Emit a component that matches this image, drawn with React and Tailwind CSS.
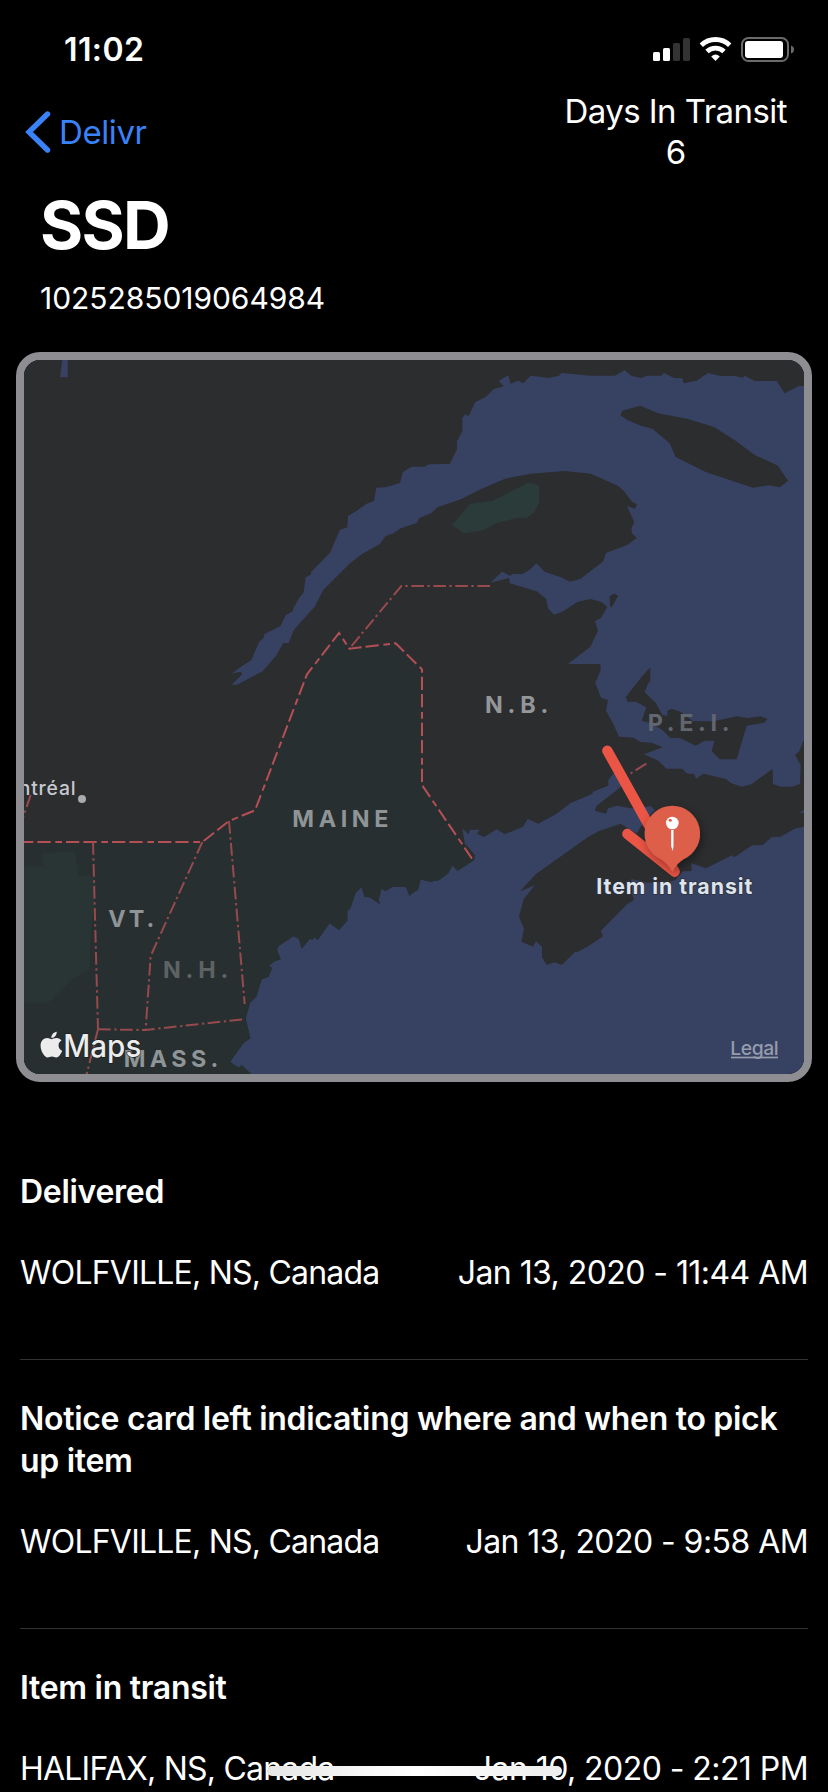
import { FaApple } from "react-icons/fa";

// The map is drawn at three units per pixel, in four quadrants.
const NW = [0, 1020];
const NE = [1242, 1020];
const SW = [0, 2100];
const SE = [1242, 2100];

const at = ([ox, oy], list) =>
  list
    .trim()
    .split(/\s+/)
    .map((p) => {
      const [x, y] = p.split(",").map(Number);
      return `${x + ox},${y + oy}`;
    })
    .join(" ");

const mainland = [
  at(NE, `1190,138 1155,138 1112,160 1088,123 1022,123 992,107 985,114 965,108 920,108 882,99 848,122 808,130 806,115 780,114 750,99 742,107 700,107 680,114 652,107 632,91 602,107 530,107 443,99 435,107 405,114 350,107 328,130 312,122 290,131 282,106 254,124 270,139 240,147 216,170 184,186 163,230 155,222 145,234 145,274 129,304 129,328 107,372 45,373 32,380 -8,380`),
  at(NW, `1208,397 1200,429 1157,442 1129,443 1122,483 1100,491 1068,514 1044,528 1042,562 1020,569 990,638 934,695 932,704 917,712 911,757 900,770 880,805 878,814 857,826 841,859 793,882 792,892 777,907 754,960 717,985 695,1001 722,995 727,1003 695,1034 710,1034 788,994 828,947 850,909 866,909 882,869 945,799 969,751 1050,670 1085,643 1140,612 1157,588 1178,581 1202,565 1242,552`),
  at(NE, `8,549 15,535 52,519 70,502 142,477 200,448 273,416 350,401 452,393 530,401 613,438 630,454 655,486 669,493 663,506 639,498 661,547 653,563 653,579 668,594 640,615 576,639 568,664 499,717 468,725 440,712 392,695 367,670 350,687 326,702 294,702 290,708 264,695 229,728 286,714 287,730 368,754 396,776 403,806 420,824 448,814 491,785 530,777 563,786 580,801 560,835 543,843 552,872 529,920 462,972 559,972 560,991 544,1028 561,1073 582,1080 576,1112`),
  at(SE, `598,72 615,110 659,113 680,126 712,128 746,142 690,163 733,182 757,206 804,206 820,221 840,221 846,236 868,221 936,237 950,249 984,260 1012,253 1076,206 1077,252 1101,260 1134,260 1158,252 1160,195 1143,165 1155,155 1168,122 1190,112 1190,328 1170,330 1155,338 1190,338 1190,376 1170,380 1142,386 1099,410 1073,412 1046,435 1015,436 961,472 954,466 876,505 832,490 833,513 806,514 785,540 765,547 700,548 652,537 655,585 660,600 640,612 560,693 567,709 521,740 490,756 483,756 443,795 422,787 398,795 384,772 384,740 366,724 357,740 322,725 330,686 315,650 329,597 363,555 317,575 365,523 522,411 555,393 620,371 642,385 668,400 690,365 722,330 709,318 680,325 650,325 608,317 582,325 576,341 542,332 548,317 575,296 625,257 600,218 583,240 583,257 536,275 536,281 470,309 427,342 373,371 341,357 327,380 272,403 248,388 211,411 189,402 197,389 168,389 163,403 145,385 152,430 183,465 181,480 131,512 115,496 103,519 75,541 48,545 20,538 12,570 0,576`),
  at(SW, `1228,587 1218,560 1178,560 1157,573 1144,566 1136,600 1141,613 1109,592 1093,590 1085,560 1067,578 1050,628 1042,632 1042,662 1017,690 989,669 953,720 942,710 938,720 930,716 905,746 897,717 880,709 835,739 831,750 842,778 824,784 806,798 816,803 806,830 785,838 769,890 750,908 737,955 751,1015 730,1030 690,1086 717,1103 725,1095 753,1122 753,1140 60,1140 60,-1040 1242,-1040 2432,-1040`),
].join(" ");

const anticosti = at(NE, "625,212 679,197 733,220 822,237 900,261 965,302 1022,345 1092,377 1122,422 1098,442 1065,436 1017,443 875,396 785,351 767,310 715,266 680,257 640,240 619,226");
const miscou = at(NE, "587,768 601,761 613,767 593,801 588,800");
const pei = at(SE, "709,-98 709,-58 701,-47 692,-23 725,8 745,45 760,48 760,32 773,26 800,35 836,64 900,64 968,49 1000,54 1040,49 1060,56 1052,68 998,77 968,178 917,178 893,154 901,122 872,122 845,137 798,114 769,114 745,90 710,70 683,62 697,22 665,5 641,5 635,-8 685,-72");
const gaspePark = at(NE, "343,428 376,436 376,486 360,518 338,533 308,534 248,549 204,572 150,580 114,555 168,491 235,483");
const adirondacks = at(SW, "125,460 225,452 235,530 268,525 290,545 272,700 270,810 220,835 145,908 60,908 60,500 130,498");
const usBorder = [
  at(SW, "60,426 607,426 687,363 765,331"),
  at(NW, "921,1003 1017,879 1048,926 1187,910 1266,988"),
  at(SE, "24,255 178,482"),
].join(" ");
const usLand = [usBorder, at(SE, "260,700"), at(SW, "1242,1140 60,1140")].join(" ");

const stateLines = [
  at(SW, "279,426 294,988"),
  at(SW, "607,426 452,768 437,988"),
  at(SW, "687,363 734,912"),
  at(SW, "294,988 437,990 737,957"),
  at(SW, "294,988 258,1130"),
  at(NE, "228,738 -38,738 -194,926"),
  at(SW, "92,285 68,356"),
  at(SE, "697,191 650,220"),
];

const labels = [
  { t: "N.B.", x: 1455, y: 2140, w: 190, c: "#94979a" },
  { t: "P.E.I.", x: 1943, y: 2192, w: 246, c: "#62666f" },
  { t: "MAINE", x: 877, y: 2481, w: 288, c: "#8f9496" },
  { t: "VT.", x: 325, y: 2782, w: 138, c: "#8f9496" },
  { t: "N.H.", x: 489, y: 2933, w: 196, c: "#5d6364" },
  { t: "MASS.", x: 371, y: 3201, w: 284, c: "#8f9496" },
];

const events = [
  { title: "Delivered", place: "WOLFVILLE, NS, Canada", when: "Jan 13, 2020 - 11:44 AM" },
  { title: "Notice card left indicating where and when to pick up item", place: "WOLFVILLE, NS, Canada", when: "Jan 13, 2020 - 9:58 AM" },
  { title: "Item in transit", place: "HALIFAX, NS, Canada", when: "Jan 10, 2020 - 2:21 PM" },
];

function StatusBar() {
  return (
    <div className="flex h-[88px] items-start justify-between pl-[64px] pr-[33px] pt-[28px]">
      <span className="pt-px text-[32px] font-semibold leading-[42px] tracking-[0.4px]">11:02</span>
      <svg width="142" height="26" viewBox="653 37 142 26" className="mt-[9px]">
        <rect x="653" y="52" width="7" height="9" rx="1.5" fill="#fff" />
        <rect x="663" y="48" width="7" height="13" rx="1.5" fill="#fff" />
        <rect x="673" y="43" width="7" height="18" rx="1.5" fill="#333" />
        <rect x="683" y="38" width="7" height="23" rx="1.5" fill="#333" />
        <g fill="none" stroke="#fff" strokeWidth="4.8">
          <path d="M701.3 45.3A20.3 20.3 0 0 1 729.7 45.3" />
          <path d="M707 51.5A12.3 12.3 0 0 1 724 51.5" />
        </g>
        <path d="M711.2 56.4Q715.500 52.800 719.800 56.400L715.500 61Z" fill="#fff" />
        <rect x="742" y="38" width="46" height="23" rx="6.500" fill="none" stroke="#6a6a6a" strokeWidth="2" />
        <rect x="745" y="41" width="38" height="17" rx="3" fill="#fff" />
        <path d="M791 45.500Q794 46.500 794 49.500T791 53.500Z" fill="#6a6a6a" />
      </svg>
    </div>
  );
}

function TransitMap() {
  return (
    <svg viewBox="72 1080 2340 2142" className="block h-full w-full" fontFamily='Inter, "Liberation Sans", sans-serif'>
      <defs>
        <clipPath id="land">
          <polygon points={mainland} />
        </clipPath>
        <filter id="pinShadow" x="-40%" y="-40%" width="180%" height="180%">
          <feDropShadow dx="6" dy="10" stdDeviation="14" floodColor="#000" floodOpacity="0.4" />
        </filter>
      </defs>
      <rect x="72" y="1080" width="2340" height="2142" fill="#374263" />
      <g fill="#2c2d2f">
        <polygon points={mainland} />
        <polygon points={anticosti} />
        <polygon points={miscou} />
        <polygon points={pei} />
      </g>
      <g clipPath="url(#land)">
        <polygon points={usLand} fill="#272f30" />
        <polygon points={adirondacks} fill="#293434" />
      </g>
      <polygon points={gaspePark} fill="#2b3b39" />
      <polygon points={at(NW, "188,50 203,50 203,112 180,112")} fill="#374263" />

      <g fill="none" strokeWidth="6">
        <polyline points={usBorder} stroke="#b44f56" strokeDasharray="40 12 40 14 20 12" />
        {stateLines.map((p) => (
          <polyline key={p} points={p} stroke="#974a4e" strokeDasharray="38 11 7 10" />
        ))}
      </g>

      <g fontSize="70" fontWeight="650">
        {labels.map((l) => (
          <text key={l.t} x={l.x} y={l.y} textLength={l.w} fill={l.c}>
            {l.t}
          </text>
        ))}
      </g>
      <text x="-37" y="2385" textLength="264" fontSize="58" fontWeight="500" fill="#c6c9cd">
        Montréal
      </text>
      <circle cx="246" cy="2397" r="12" fill="#a9abaf" />

      <polyline points={at(SE, "580,152 782,515 640,402")} fill="none" stroke="#eb5545" strokeWidth="31" strokeLinecap="round" strokeLinejoin="round" />
      <path
        d="M2017 2417A84 84 0 0 1 2052 2577Q2030 2590 2017 2615Q2004 2590 1982 2577A84 84 0 0 1 2017 2417Z"
        fill="#dd5e48"
        filter="url(#pinShadow)"
      />
      <circle cx="2017" cy="2469" r="19" fill="#fff" />
      <circle cx="2011" cy="2461" r="4.500" fill="#dd5e48" />
      <path d="M2013.500 2490H2020.500V2538L2018 2553L2013.500 2538Z" fill="#fff" />
      <text x="1789" y="2681" textLength="468" fontSize="64" fontWeight="700" fill="#dfe3ea" stroke="#2c3242" strokeWidth="5" paintOrder="stroke">
        Item in transit
      </text>

      <g fill="#ececec" stroke="#1c2020" strokeWidth="4" paintOrder="stroke">
        <FaApple x="110" y="3090" size={88} color="#ececec" strokeWidth="0" />
        <text x="190" y="3170" textLength="234" lengthAdjust="spacingAndGlyphs" fontSize="93" fontWeight="450">
          Maps
        </text>
      </g>
      <text x="2191" y="3166" textLength="145" fontSize="58" fontWeight="500" fill="#959cac">
        Legal
      </text>
      <rect x="2193" y="3170" width="141" height="5" fill="#959cac" />
    </svg>
  );
}

export default function App() {
  return (
    <div className="relative h-[1792px] w-[828px] overflow-hidden bg-black font-['Inter','Liberation_Sans',sans-serif] text-white">
      <StatusBar />

      <header className="flex h-[96px] items-start justify-between pl-[25px] pr-[41px]">
        <div className="flex h-[88px] items-center gap-[8px] text-[#3a82f7]">
          <svg width="26" height="44" viewBox="0 0 26 44" fill="none">
            <path d="M22.500 4L4 22L22.500 40" stroke="currentColor" strokeWidth="5.400" strokeLinecap="round" />
          </svg>
          <span className="text-[33px] leading-[42px] tracking-[-0.4px]">Delivr</span>
        </div>
        <div className="pt-[3px] text-center text-[33px] leading-[41px] tracking-[-0.55px]">
          <div>Days In Transit</div>
          <div>6</div>
        </div>
      </header>

      <div className="flex h-[168px] flex-col px-[40px]">
        <h1 className="text-[66px] font-bold leading-[82px] tracking-[-1.7px]">SSD</h1>
        <p className="mt-[12px] text-[30px] leading-[40px] tracking-[-0.05px]">1025285019064984</p>
      </div>

      <div className="mx-4 h-[730px] overflow-hidden rounded-[24px] border-8 border-[#8e8d92]">
        <TransitMap />
      </div>

      <ul className="mt-[51px] flex flex-col px-[20px] text-[32px] leading-[42px]">
        {events.map((e) => (
          <li key={e.title} className="border-b border-[#323234] pb-[65px] pt-[38px]">
            <h2 className="font-semibold tracking-[-0.3px]">{e.title}</h2>
            <div className="mt-[39px] flex justify-between whitespace-nowrap">
              <span className="tracking-[-0.78px]">{e.place}</span>
              <span className="tracking-[-0.56px]">{e.when}</span>
            </div>
          </li>
        ))}
      </ul>

      <div className="absolute left-[267px] top-[1766px] h-[10px] w-[295px] rounded-full bg-linear-to-r from-[#e6e6e6] via-white to-[#ededed]" />
    </div>
  );
}
